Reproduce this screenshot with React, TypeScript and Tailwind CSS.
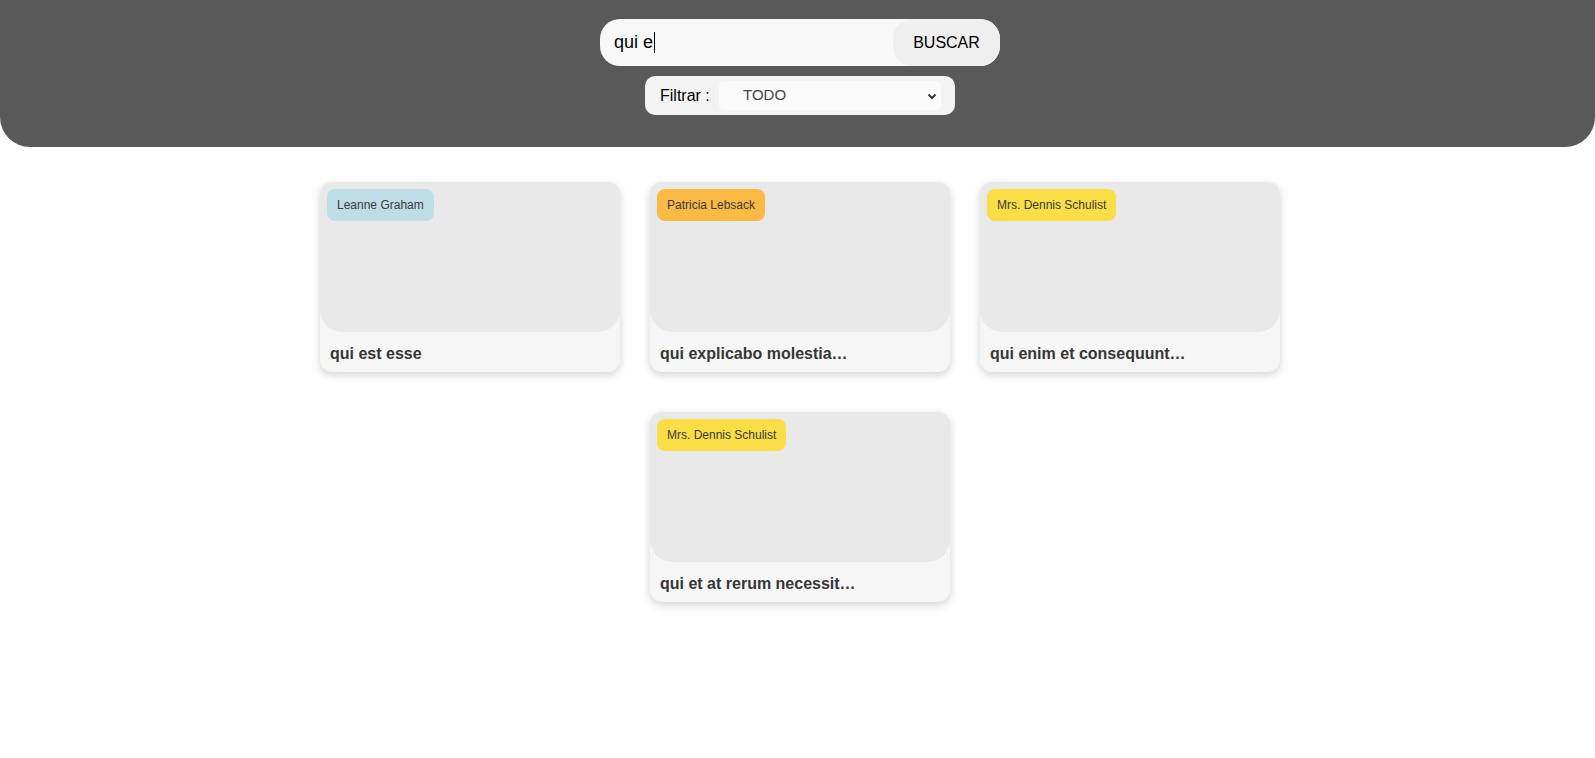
import React from "react";

type Post = { author: string; title: string; color: string };

const posts: Post[] = [
  { author: "Leanne Graham", title: "qui est esse", color: "bg-[#bfdde6]" },
  { author: "Patricia Lebsack", title: "qui explicabo molestia...", color: "bg-[#fbb946]" },
  { author: "Mrs. Dennis Schulist", title: "qui enim et consequunt...", color: "bg-[#f9de47]" },
  { author: "Mrs. Dennis Schulist", title: "qui et at rerum necessit...", color: "bg-[#f9de47]" },
];

function Card({ post }: { post: Post }) {
  return (
    <div className="w-[300px] h-[190px] rounded-[12px] bg-[#f6f6f6] shadow-[0_3px_8px_rgba(0,0,0,0.18)] flex flex-col">
      <div className="h-[150px] bg-[#e9e9e9] rounded-t-[12px] rounded-b-[22px] p-[7px] flex items-start">
        <span
          className={`${post.color} rounded-[8px] h-[32px] px-[10px] flex items-center text-[12px] text-[#3a3a3a]`}
        >
          {post.author}
        </span>
      </div>
      <div className="flex-1 flex items-center px-[10px] pt-[4px] text-[16px] font-bold text-[#363636]">
        {post.title.replace("...", "\u2026")}
      </div>
    </div>
  );
}

export default function App() {
  return (
    <div
      className="min-h-[758px] bg-white"
      style={{ fontFamily: '"Liberation Sans", Arial, sans-serif' }}
    >
      <header className="h-[147px] bg-[#595959] rounded-b-[30px] pl-[5px] pt-[19px] flex flex-col items-center">
        <div className="w-[400px] h-[47px] rounded-[20px] bg-[#f8f8f8] flex">
          <div className="flex-1 flex items-center pl-[14px] text-[18px] text-black">
            <span>qui e</span>
            <span className="w-px h-[21px] bg-black ml-px" />
          </div>
          <button className="w-[107px] h-full rounded-[20px] bg-[#efefef] text-[16px] text-black">
            BUSCAR
          </button>
        </div>
        <div className="mt-[10px] w-[310px] h-[39px] rounded-[10px] bg-[#f3f3f3] flex items-center pl-[15px] pr-[14px]">
          <span className="text-[16px] text-black w-[59px] shrink-0">Filtrar :</span>
          <div className="flex-1 h-[29px] rounded-[5px] bg-[#fafafa] flex items-center pl-[24px] pr-[4px] text-[15px] text-[#444]">
            <span className="flex-1">TODO</span>
            <svg width="10" height="10" viewBox="0 0 10 10">
              <path d="M1.5 3.5 L5 7 L8.5 3.5" fill="none" stroke="#333" strokeWidth="2" />
            </svg>
          </div>
        </div>
      </header>
      <main className="pl-[5px] pt-[35px]">
        <div className="w-[960px] mx-auto flex flex-wrap justify-center gap-x-[30px] gap-y-[40px]">
          {posts.map((p, i) => (
            <Card key={i} post={p} />
          ))}
        </div>
      </main>
    </div>
  );
}
